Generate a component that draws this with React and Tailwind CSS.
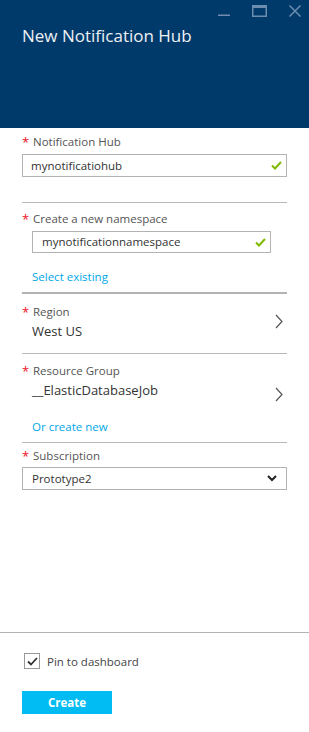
import React from "react";

const font = { fontFamily: '"Open Sans", "Noto Sans", sans-serif' };

function Check() {
  return (
    <svg width="11" height="9" viewBox="0 0 11 9" className="shrink-0">
      <path d="M1 4.5 L4 7.5 L10 1" fill="none" stroke="#7fba00" strokeWidth="2" />
    </svg>
  );
}

function ChevronRight() {
  return (
    <svg width="8" height="15" viewBox="0 0 8 15" className="shrink-0">
      <path d="M1 1 L7 7.5 L1 14" fill="none" stroke="#555" strokeWidth="1.2" />
    </svg>
  );
}

function Label({ children }) {
  return (
    <div className="flex items-center h-[16px] text-[11.5px] text-[#555] leading-[16px]">
      <span className="text-[#e81123] w-[11px] text-[13px] leading-[16px]">*</span>
      <span>{children}</span>
    </div>
  );
}

export default function App() {
  return (
    <div className="w-[309px] h-[732px] bg-white flex flex-col overflow-hidden" style={font}>
      <div className="h-[128px] bg-[#003a6b] shrink-0 flex flex-col">
        <div className="flex justify-end items-start h-[22px] pt-[5px] pr-[8px] gap-[22px]">
          <svg width="12" height="12" viewBox="0 0 12 12">
            <rect x="0" y="9.5" width="12" height="1.5" fill="#6d8db0" />
          </svg>
          <svg width="15" height="12" viewBox="0 0 15 12">
            <rect x="0.75" y="0.75" width="13.5" height="10.5" fill="none" stroke="#6d8db0" strokeWidth="1.5" />
            <rect x="0" y="0" width="15" height="3" fill="#6d8db0" />
          </svg>
          <svg width="12" height="12" viewBox="0 0 12 12">
            <path d="M0.5 0.5 L11.5 11.5 M11.5 0.5 L0.5 11.5" stroke="#6d8db0" strokeWidth="1.5" />
          </svg>
        </div>
        <div className="pl-[22px] pt-[2px] text-[17px] leading-[24px] text-[#eef1f5]">New Notification Hub</div>
      </div>

      <div className="px-[22px]">
        <div className="pt-[6px]">
          <Label>Notification Hub</Label>
          <div className="mt-[4px] h-[23px] border border-[#b3b3b3] flex items-center pl-[8px] pr-[4px] text-[11.5px] text-[#333]">
            <span className="flex-1">mynotificatiohub</span>
            <Check />
          </div>
        </div>
        <div className="mt-[25px] border-t border-[#b9b9b9]" />

        <div className="pt-[8px]">
          <Label>Create a new namespace</Label>
          <div className="mt-[4px] ml-[10px] w-[239px] h-[22px] border border-[#b3b3b3] flex items-center pl-[9px] pr-[4px] text-[11.5px] text-[#333]">
            <span className="flex-1">mynotificationnamespace</span>
            <Check />
          </div>
          <div className="mt-[16px] pl-[10px] h-[16px] leading-[16px] text-[11.5px] text-[#00a8e8]">Select existing</div>
        </div>
        <div className="mt-[7px] border-t-2 border-[#b3b3b3]" />

        <div className="pt-[10px] flex items-start">
          <div className="flex-1">
            <Label>Region</Label>
            <div className="mt-[2px] pl-[10px] h-[18px] leading-[18px] text-[13px] text-[#333]">West US</div>
          </div>
          <div className="pt-[10px] pr-[4px]"><ChevronRight /></div>
        </div>
        <div className="mt-[13px] border-t border-[#b9b9b9]" />

        <div className="pt-[9px] flex items-start">
          <div className="flex-1">
            <Label>Resource Group</Label>
            <div className="mt-[2px] pl-[10px] h-[18px] leading-[18px] text-[13px] text-[#333]">__ElasticDatabaseJob</div>
          </div>
          <div className="pt-[24px] pr-[4px]"><ChevronRight /></div>
        </div>
        <div className="mt-[17px] pl-[10px] h-[16px] leading-[16px] text-[11.5px] text-[#00a8e8]">Or create new</div>
        <div className="mt-[7px] border-t border-[#b9b9b9]" />

        <div className="pt-[5px]">
          <Label>Subscription</Label>
          <div className="mt-[3px] h-[23px] border border-[#b3b3b3] flex items-center pl-[9px] pr-[9px] text-[11.5px] text-[#333]">
            <span className="flex-1">Prototype2</span>
            <svg width="10" height="7" viewBox="0 0 10 7">
              <path d="M1 1 L5 5 L9 1" fill="none" stroke="#222" strokeWidth="2" />
            </svg>
          </div>
        </div>
      </div>

      <div className="mt-auto border-t border-[#b3b3b3] pt-[20px] pb-[18px] px-[22px]">
        <div className="flex items-center h-[16px] pl-[2px] gap-[7px]">
          <div className="w-[16px] h-[16px] border border-[#999] flex items-center justify-center bg-white">
            <svg width="11" height="9" viewBox="0 0 11 9">
              <path d="M1 4.5 L4 7.5 L10 1" fill="none" stroke="#333" strokeWidth="1.8" />
            </svg>
          </div>
          <span className="text-[11.5px] text-[#444] leading-[16px] pt-[2px]">Pin to dashboard</span>
        </div>
        <button className="mt-[22px] w-[90px] h-[23px] bg-[#00bcf2] text-white font-bold text-[11.5px] leading-[23px] text-center">Create</button>
      </div>
    </div>
  );
}
